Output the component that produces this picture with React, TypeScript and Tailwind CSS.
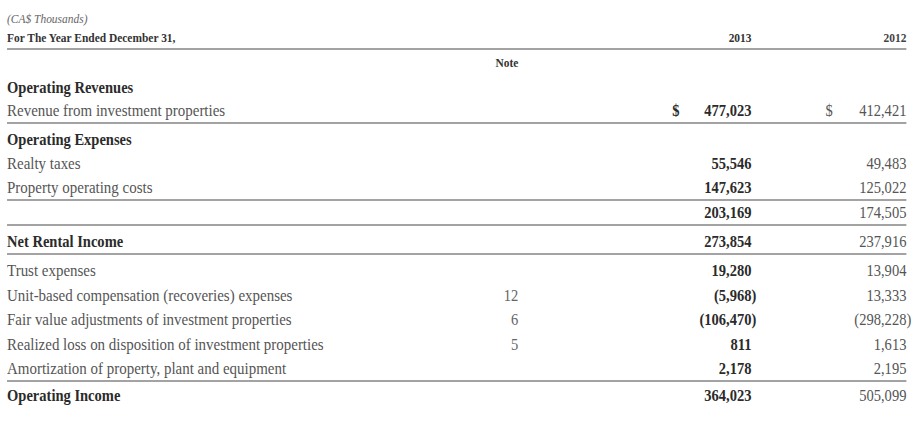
import React from "react";

type RowProps = {
  label?: string;
  note?: string;
  v13?: string;
  v12?: string;
  head?: boolean;
  dollar?: boolean;
  className: string;
};

function Num({ v }: { v?: string }) {
  if (!v) return <span />;
  if (v.endsWith(")")) {
    return (
      <span>
        {v.slice(0, -1)}
        <span className="inline-block w-0">)</span>
      </span>
    );
  }
  return <span>{v}</span>;
}

function Row({ label, note, v13, v12, head, dollar, className }: RowProps) {
  return (
    <div className={`flex items-center leading-[20px] ${className}`}>
      <div
        className={`flex-1 whitespace-nowrap ${
          head ? "font-bold text-[16.5px] text-[#2b2b2b]" : "text-[17px] text-[#555555]"
        }`}
      >
        {label}
      </div>
      <div className="w-[61px] text-right text-[16.5px] text-[#666666]">{note}</div>
      <div className="w-[175px]" />
      <div className="w-[90px] flex justify-between font-bold text-[16.5px] text-[#2b2b2b]">
        <span>{dollar ? "$" : ""}</span>
        <Num v={v13} />
      </div>
      <div className="w-[84px]" />
      <div className="w-[92px] flex justify-between text-[16.5px] text-[#555555]">
        <span>{dollar ? "$" : ""}</span>
        <Num v={v12} />
      </div>
    </div>
  );
}

export default function App() {
  return (
    <div className="w-[918px] h-[422px] overflow-hidden bg-white">
      <div className="w-[1040px] origin-top-left scale-x-[0.88] pl-[8px] pr-[10px] pt-[9px] font-['Liberation_Serif','Times_New_Roman',serif]">
        <div className="h-[19px] flex items-center italic text-[13px] text-[#666666] leading-[16px]">
          (CA$ Thousands)
        </div>
        <div className="h-[22px] flex items-center border-b-2 border-[#a3a3a3] font-bold text-[13px] leading-[16px]">
          <div className="flex-1 text-[#333333]">For The Year Ended December 31,</div>
          <div className="w-[61px]" />
          <div className="w-[175px]" />
          <div className="w-[90px] text-right text-[#333333]">2013</div>
          <div className="w-[84px]" />
          <div className="w-[92px] text-right text-[#444444]">2012</div>
        </div>
        <div className="h-[26px] flex items-center font-bold text-[13px] leading-[16px]">
          <div className="flex-1" />
          <div className="w-[61px] text-right text-[#333333]">Note</div>
          <div className="w-[441px]" />
        </div>
        <Row className="h-[24px]" head label="Operating Revenues" />
        <Row
          className="h-[24px] border-b-2 border-[#a3a3a3]"
          label="Revenue from investment properties"
          dollar
          v13="477,023"
          v12="412,421"
        />
        <Row className="h-[28px] pt-[4px]" head label="Operating Expenses" />
        <Row className="h-[24px]" label="Realty taxes" v13="55,546" v12="49,483" />
        <Row
          className="h-[25px] border-b-2 border-[#a3a3a3]"
          label="Property operating costs"
          v13="147,623"
          v12="125,022"
        />
        <Row className="h-[25px] border-b-2 border-[#a3a3a3]" v13="203,169" v12="174,505" />
        <Row
          className="h-[29px] pt-[4px] border-b-2 border-[#a3a3a3]"
          head
          label="Net Rental Income"
          v13="273,854"
          v12="237,916"
        />
        <Row className="h-[28.5px] pt-[4px]" label="Trust expenses" v13="19,280" v12="13,904" />
        <Row
          className="h-[24.5px]"
          label="Unit-based compensation (recoveries) expenses"
          note="12"
          v13="(5,968)"
          v12="13,333"
        />
        <Row
          className="h-[24.5px]"
          label="Fair value adjustments of investment properties"
          note="6"
          v13="(106,470)"
          v12="(298,228)"
        />
        <Row
          className="h-[24.5px]"
          label="Realized loss on disposition of investment properties"
          note="5"
          v13="811"
          v12="1,613"
        />
        <Row
          className="h-[25px] border-b-2 border-[#a3a3a3]"
          label="Amortization of property, plant and equipment"
          v13="2,178"
          v12="2,195"
        />
        <Row className="h-[28px]" head label="Operating Income" v13="364,023" v12="505,099" />
      </div>
    </div>
  );
}
